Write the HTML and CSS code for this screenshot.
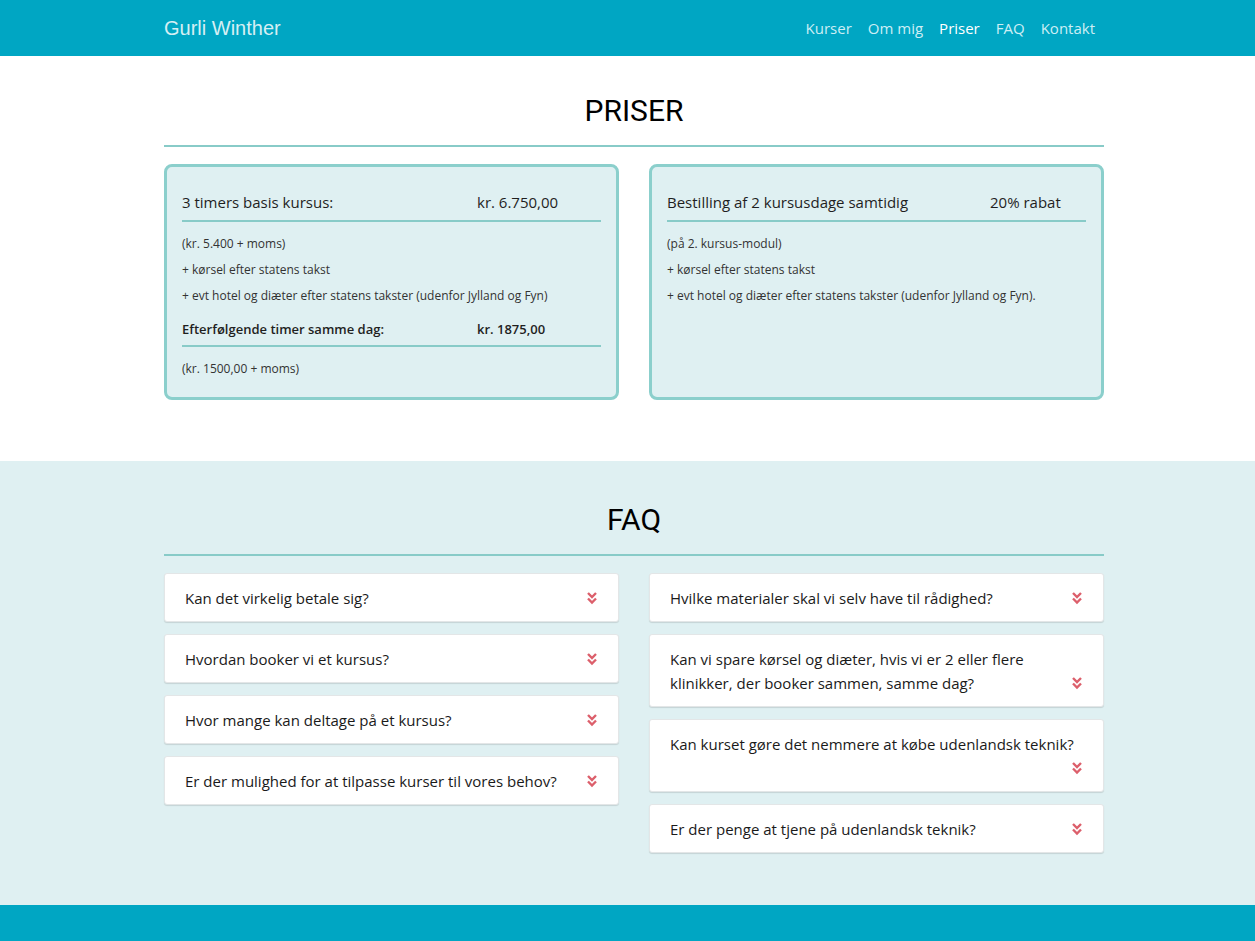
FILE: index.html
```html
<!DOCTYPE html>
<html lang="da">
<head>
<meta charset="utf-8">
<title>Gurli Winther</title>
<link rel="stylesheet" href="styles.css">
</head>
<body>
<header class="topbar">
  <div class="container topbar-inner">
    <a class="brand" href="#">Gurli Winther</a>
    <nav class="nav">
      <a href="#">Kurser</a>
      <a href="#">Om mig</a>
      <a href="#" class="active">Priser</a>
      <a href="#">FAQ</a>
      <a href="#">Kontakt</a>
    </nav>
  </div>
</header>

<section class="section prices">
  <div class="container">
    <h2 class="section-title">PRISER</h2>
    <hr class="rule">
    <div class="price-grid">
      <div class="price-card">
        <div class="price-row row-main cols-a"><span>3 timers basis kursus:</span><span>kr. 6.750,00</span></div>
        <p class="note">(kr. 5.400 + moms)</p>
        <p class="note">+ kørsel efter statens takst</p>
        <p class="note">+ evt hotel og diæter efter statens takster (udenfor Jylland og Fyn)</p>
        <div class="price-row row-sub cols-a"><span>Efterfølgende timer samme dag:</span><span>kr. 1875,00</span></div>
        <p class="note">(kr. 1500,00 + moms)</p>
      </div>
      <div class="price-card">
        <div class="price-row row-main cols-b"><span>Bestilling af 2 kursusdage samtidig</span><span>20% rabat</span></div>
        <p class="note">(på 2. kursus-modul)</p>
        <p class="note">+ kørsel efter statens takst</p>
        <p class="note">+ evt hotel og diæter efter statens takster (udenfor Jylland og Fyn).</p>
      </div>
    </div>
  </div>
</section>

<section class="section faq">
  <div class="container">
    <h2 class="section-title">FAQ</h2>
    <hr class="rule">
    <div class="faq-grid">
      <div class="faq-col">
        <div class="faq-item">Kan det virkelig betale sig?<span class="chev"><svg viewBox="0 0 12 14" width="12" height="14"><path d="M2 2l4 4 4-4M2 7.5l4 4 4-4" fill="none" stroke="#dc5f6b" stroke-width="2.4"/></svg></span></div>
        <div class="faq-item">Hvordan booker vi et kursus?<span class="chev"><svg viewBox="0 0 12 14" width="12" height="14"><path d="M2 2l4 4 4-4M2 7.5l4 4 4-4" fill="none" stroke="#dc5f6b" stroke-width="2.4"/></svg></span></div>
        <div class="faq-item">Hvor mange kan deltage på et kursus?<span class="chev"><svg viewBox="0 0 12 14" width="12" height="14"><path d="M2 2l4 4 4-4M2 7.5l4 4 4-4" fill="none" stroke="#dc5f6b" stroke-width="2.4"/></svg></span></div>
        <div class="faq-item">Er der mulighed for at tilpasse kurser til vores behov?<span class="chev"><svg viewBox="0 0 12 14" width="12" height="14"><path d="M2 2l4 4 4-4M2 7.5l4 4 4-4" fill="none" stroke="#dc5f6b" stroke-width="2.4"/></svg></span></div>
      </div>
      <div class="faq-col">
        <div class="faq-item">Hvilke materialer skal vi selv have til rådighed?<span class="chev"><svg viewBox="0 0 12 14" width="12" height="14"><path d="M2 2l4 4 4-4M2 7.5l4 4 4-4" fill="none" stroke="#dc5f6b" stroke-width="2.4"/></svg></span></div>
        <div class="faq-item">Kan vi spare kørsel og diæter, hvis vi er 2 eller flere klinikker, der booker sammen, samme dag?<span class="chev"><svg viewBox="0 0 12 14" width="12" height="14"><path d="M2 2l4 4 4-4M2 7.5l4 4 4-4" fill="none" stroke="#dc5f6b" stroke-width="2.4"/></svg></span></div>
        <div class="faq-item">Kan kurset gøre det nemmere at købe udenlandsk teknik?<span class="chev"><svg viewBox="0 0 12 14" width="12" height="14"><path d="M2 2l4 4 4-4M2 7.5l4 4 4-4" fill="none" stroke="#dc5f6b" stroke-width="2.4"/></svg></span></div>
        <div class="faq-item">Er der penge at tjene på udenlandsk teknik?<span class="chev"><svg viewBox="0 0 12 14" width="12" height="14"><path d="M2 2l4 4 4-4M2 7.5l4 4 4-4" fill="none" stroke="#dc5f6b" stroke-width="2.4"/></svg></span></div>
      </div>
    </div>
  </div>
</section>

<footer class="footer"></footer>
</body>
</html>
```

FILE: styles.css
```css
* { box-sizing: border-box; }
html, body { margin: 0; padding: 0; }
body {
  font-family: "Open Sans", Lato, sans-serif;
  color: #222;
  background: #fff;
}
.container {
  width: 940px;
  margin-left: calc(50% - 463.5px);
}

/* top bar */
.topbar {
  background: #00a6c3;
  height: 56px;
}
.topbar-inner {
  height: 56px;
  display: flex;
  align-items: center;
  justify-content: space-between;
}
.brand {
  font-family: "Liberation Sans", Arial, sans-serif;
  font-size: 20px;
  color: #d6eff4;
  text-decoration: none;
}
.nav {
  display: flex;
  gap: 16px;
  margin-right: 9px;
}
.nav a {
  font-size: 15px;
  color: #cdeef5;
  text-decoration: none;
}
.nav a.active { color: #fff; }

/* sections */
.section.prices { padding: 37px 0 61px; background: #fff; }
.section.faq { padding: 41px 0 52px; background: #dff0f2; }

.section-title {
  font-family: Roboto, "Liberation Sans", sans-serif;
  font-weight: 400;
  font-size: 30px;
  line-height: 36px;
  text-align: center;
  margin: 0 0 16px;
  color: #000;
}
.rule {
  border: 0;
  height: 2px;
  background: #88cbc8;
  margin: 0 0 17px;
}

/* price cards */
.price-grid {
  display: grid;
  grid-template-columns: 1fr 1fr;
  gap: 30px;
}
.price-card {
  background: #dff0f2;
  border: 3px solid #8bcfcc;
  border-radius: 8px;
  padding: 25px 15px 15px;
}
.price-row {
  display: grid;
  border-bottom: 2px solid #88cbc8;
  line-height: 20px;
  color: #1f1f1f;
}
.cols-a { grid-template-columns: 295px 1fr; }
.cols-b { grid-template-columns: 323px 1fr; }
.row-main {
  font-size: 15px;
  font-weight: 500;
  padding-bottom: 8px;
}
.row-sub {
  font-size: 13px;
  font-weight: 600;
  padding-bottom: 6px;
  margin-top: 10px;
}
.note {
  margin: 0;
  font-size: 12px;
  line-height: 26px;
  color: #333;
}
.price-row + .note { margin-top: 9px; }

/* faq */
.faq-grid {
  display: grid;
  grid-template-columns: 1fr 1fr;
  gap: 30px;
  align-items: start;
}
.faq-col {
  display: flex;
  flex-direction: column;
  gap: 12px;
}
.faq-item {
  background: #fff;
  border: 1px solid #e3e6e7;
  border-radius: 3px;
  box-shadow: 0 1px 1px rgba(0,0,0,0.12);
  padding: 12px 20px 11px 20px;
  font-size: 15px;
  font-weight: 500;
  line-height: 24px;
  color: #1a1a1a;
}
.chev {
  float: right;
  height: 24px;
  display: flex;
  align-items: center;
}
.chev svg { display: block; }

.footer {
  background: #00a6c3;
  height: 60px;
}
```
